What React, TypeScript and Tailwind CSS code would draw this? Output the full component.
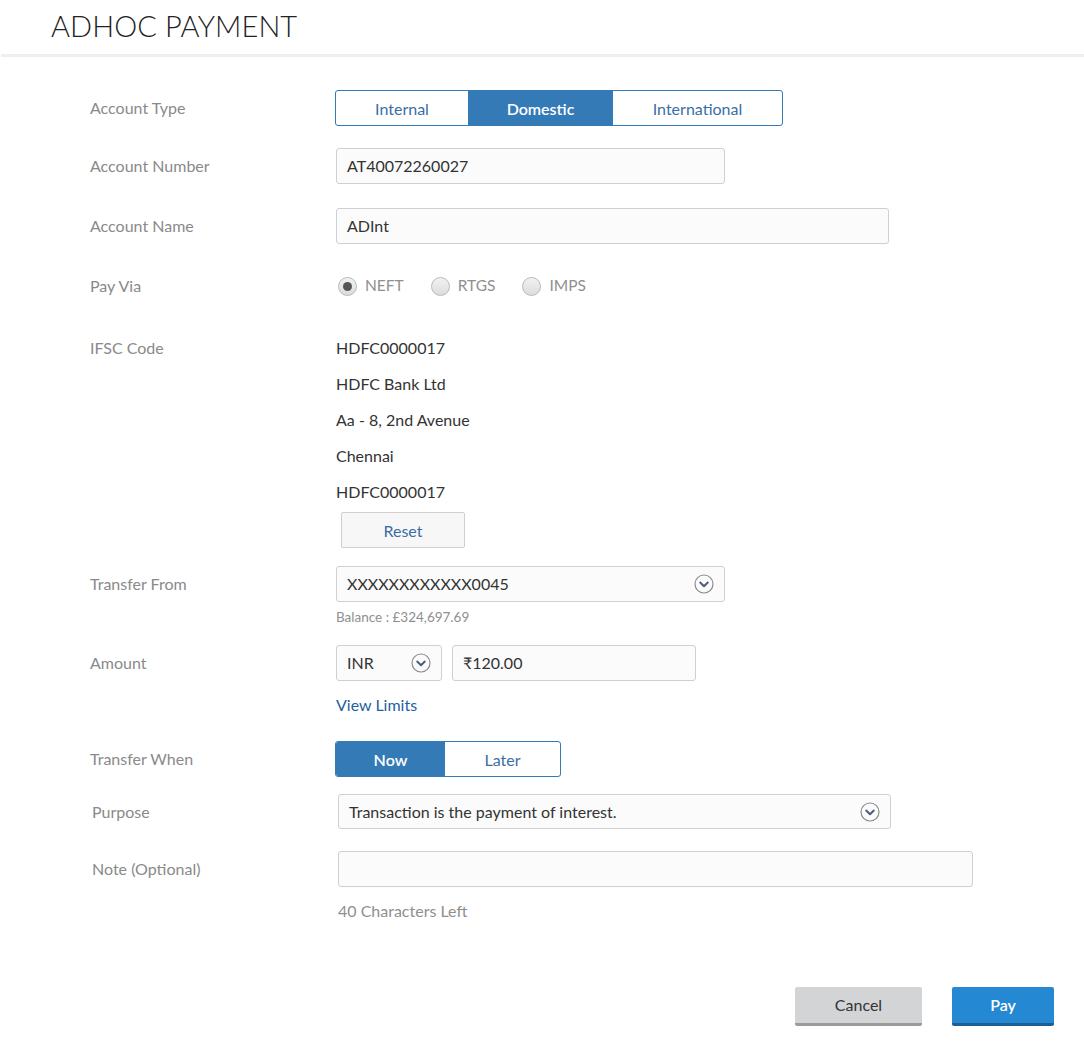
import React from "react";

const font = { fontFamily: "Lato, 'Open Sans', sans-serif" };

function Chevron() {
  return (
    <svg width="20" height="20" viewBox="0 0 20 20">
      <circle cx="10" cy="10" r="9" fill="none" stroke="#8c8c8c" strokeWidth="1.2" />
      <path d="M6.2 8.6 L10 12.2 L13.8 8.6" fill="none" stroke="#4d5c78" strokeWidth="2" strokeLinecap="round" strokeLinejoin="round" />
    </svg>
  );
}

function Radio({ checked, label }: { checked?: boolean; label: string }) {
  return (
    <div className="flex items-center">
      <span className="w-[19px] h-[19px] rounded-full border border-[#b9b9b9] bg-gradient-to-b from-[#f2f2f2] to-[#dcdcdc] flex items-center justify-center">
        {checked && <span className="w-[9px] h-[9px] rounded-full bg-[#555]" />}
      </span>
      <span className="ml-[8px] text-[15.5px] text-[#8f8f8f]">{label}</span>
    </div>
  );
}

function Label({ children }: { children: React.ReactNode }) {
  return <div className="w-[246px] shrink-0 text-[16px] text-[#8a8a8a]">{children}</div>;
}

export default function App() {
  return (
    <div className="min-h-screen bg-white text-[#333]" style={font}>
      <header className="h-[57px] border-b-[3px] border-[#efeff3] ml-px flex items-start">
        <h1 className="ml-[50px] mt-[4px] text-[29px] font-light tracking-[0.1px] text-[#222]">ADHOC PAYMENT</h1>
      </header>

      <main className="pl-[90px]">
        {/* Account Type */}
        <div className="flex items-center mt-[33px]">
          <Label>Account Type</Label>
          <div className="flex h-[36px] border border-[#337ab7] rounded-[3px] overflow-hidden -ml-px text-[16px]">
            <div className="w-[132px] pt-px flex items-center justify-center text-[#3a6ea5]">Internal</div>
            <div className="w-[145px] pt-px flex items-center justify-center bg-[#337ab7] text-white font-semibold">Domestic</div>
            <div className="w-[169px] pt-px flex items-center justify-center text-[#3a6ea5]">International</div>
          </div>
        </div>

        {/* Account Number */}
        <div className="flex items-center mt-[22px]">
          <Label>Account Number</Label>
          <div className="w-[389px] h-[36px] border border-[#d0d0d0] rounded-[3px] bg-[#fbfbfb] flex items-center px-[10px] text-[16px]">AT40072260027</div>
        </div>

        {/* Account Name */}
        <div className="flex items-center mt-[24px]">
          <Label>Account Name</Label>
          <div className="w-[553px] h-[36px] border border-[#d0d0d0] rounded-[3px] bg-[#fbfbfb] flex items-center px-[10px] text-[16px]">ADInt</div>
        </div>

        {/* Pay Via */}
        <div className="flex items-center mt-[24px] h-[36px]">
          <Label>Pay Via</Label>
          <div className="flex items-center gap-[27px] ml-[2px]">
            <Radio checked label="NEFT" />
            <Radio label="RTGS" />
            <Radio label="IMPS" />
          </div>
        </div>

        {/* IFSC */}
        <div className="flex mt-[26px]">
          <div className="w-[246px] shrink-0 text-[16px] text-[#8a8a8a] leading-[36px]">IFSC Code</div>
          <div className="text-[16px] leading-[36px]">
            <div>HDFC0000017</div>
            <div>HDFC Bank Ltd</div>
            <div>Aa - 8, 2nd Avenue</div>
            <div>Chennai</div>
            <div>HDFC0000017</div>
            <button className="mt-[2px] ml-[5px] w-[124px] h-[36px] pt-px border border-[#cfcfcf] rounded-[2px] bg-[#f7f7f7] text-[16px] text-[#3a6ea5] flex items-center justify-center">Reset</button>
          </div>
        </div>

        {/* Transfer From */}
        <div className="flex items-center mt-[18px]">
          <Label>Transfer From</Label>
          <div className="w-[389px] h-[36px] border border-[#d0d0d0] rounded-[3px] bg-[#fbfbfb] flex items-center justify-between pl-[10px] pr-[10px] text-[16px]">
            <span>XXXXXXXXXXXX0045</span>
            <Chevron />
          </div>
        </div>
        <div className="ml-[246px] mt-[5px] text-[13.5px] leading-[20px] text-[#8f8f8f]">Balance : £324,697.69</div>

        {/* Amount */}
        <div className="flex items-center mt-[18px]">
          <Label>Amount</Label>
          <div className="w-[106px] h-[36px] border border-[#d0d0d0] rounded-[3px] bg-[#fbfbfb] flex items-center justify-between pl-[10px] pr-[10px] text-[16px]">
            <span>INR</span>
            <Chevron />
          </div>
          <div className="ml-[10px] w-[244px] h-[36px] border border-[#d0d0d0] rounded-[3px] bg-[#fbfbfb] flex items-center px-[10px] text-[16px]">₹120.00</div>
        </div>
        <div className="ml-[246px] mt-[12px] text-[16px] leading-[24px] text-[#1f5f9e]">View Limits</div>

        {/* Transfer When */}
        <div className="flex items-center mt-[24px]">
          <Label>Transfer When</Label>
          <div className="flex h-[36px] border border-[#337ab7] rounded-[3px] overflow-hidden -ml-px text-[16px]">
            <div className="w-[109px] pt-px flex items-center justify-center bg-[#337ab7] text-white font-semibold">Now</div>
            <div className="w-[115px] pt-px flex items-center justify-center text-[#3a6ea5]">Later</div>
          </div>
        </div>

        <div className="pl-[2px]">
          {/* Purpose */}
          <div className="flex items-center mt-[17px]">
            <Label>Purpose</Label>
            <div className="w-[553px] h-[35px] border border-[#d0d0d0] rounded-[3px] bg-[#fbfbfb] flex items-center justify-between pl-[10px] pr-[10px] text-[16px]">
              <span>Transaction is the payment of interest.</span>
              <Chevron />
            </div>
          </div>

          {/* Note */}
          <div className="flex items-center mt-[22px]">
            <Label>Note (Optional)</Label>
            <div className="w-[635px] h-[36px] border border-[#d0d0d0] rounded-[3px] bg-[#fbfbfb]" />
          </div>
          <div className="ml-[246px] mt-[12px] text-[16px] leading-[24px] text-[#8f8f8f]">40 Characters Left</div>
        </div>

        {/* Actions */}
        <div className="flex justify-end gap-[30px] mt-[64px] pr-[30px]">
          <button className="w-[127px] h-[39px] bg-[#d3d4d6] border-b-[3px] border-[#9b9b9b] rounded-[2px] text-[16px] text-[#333]">Cancel</button>
          <button className="w-[102px] h-[39px] bg-[#2488d2] border-b-[3px] border-[#1d5f92] rounded-[2px] text-[16px] text-white font-semibold">Pay</button>
        </div>
      </main>
    </div>
  );
}
